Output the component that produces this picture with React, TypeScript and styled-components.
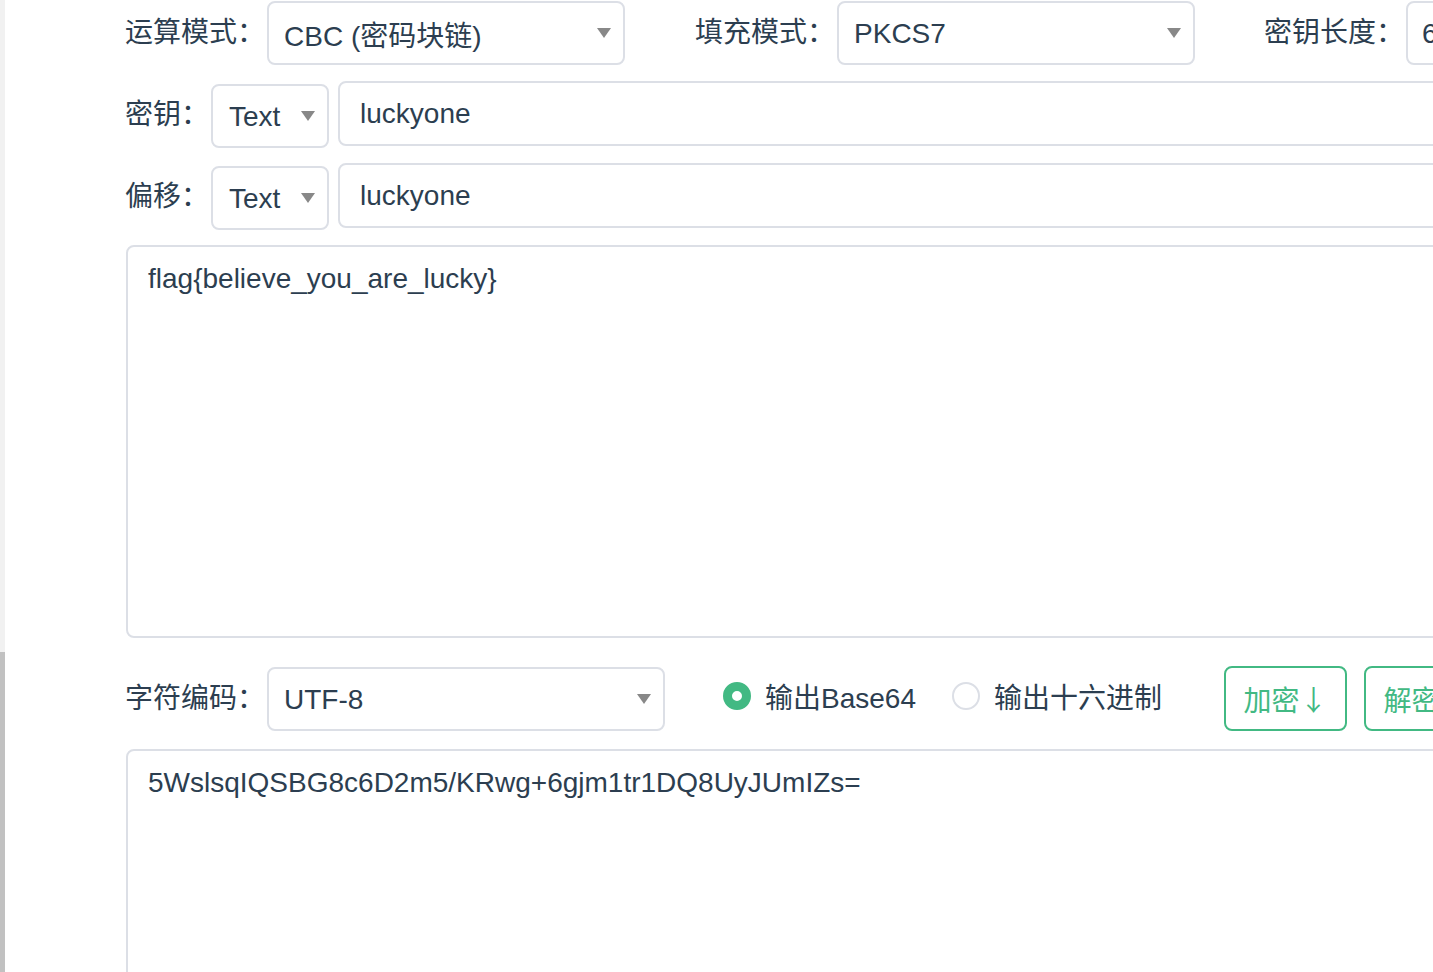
import React from 'react';
import styled, { createGlobalStyle } from 'styled-components';

const GlobalStyle = createGlobalStyle`
  *, *::before, *::after { box-sizing: border-box; }
  html, body { margin: 0; padding: 0; background: #fff; overflow: hidden; }
  body {
    font-family: "Liberation Sans", "Noto Sans CJK SC", sans-serif;
    color: #2c3e50;
  }
`;

const FONT = `"Liberation Sans", "Noto Sans CJK SC", sans-serif`;
const BORDER = '#dcdfe6';
const GREEN = '#42b983';

const Page = styled.div`
  display: flex;
  width: 1433px;
  height: 972px;
  overflow: hidden;
`;

const ScrollTrack = styled.div`
  flex: 0 0 5px;
  display: flex;
  flex-direction: column;
  background: #f1f1f1;
`;

const ScrollThumb = styled.div`
  margin-top: 652px;
  flex: 1;
  background: #c1c1c1;
`;

const Main = styled.div`
  flex: 0 0 1800px;
  padding: 1px 0 0 120px;
  display: flex;
  flex-direction: column;
`;

const Row = styled.div<{ $mt?: number; $align?: string }>`
  display: flex;
  flex-shrink: 0;
  align-items: ${(p) => p.$align ?? 'center'};
  margin-top: ${(p) => p.$mt ?? 0}px;
`;

const Field = styled.div<{ $ml?: number }>`
  display: flex;
  align-items: center;
  margin-left: ${(p) => p.$ml ?? 0}px;
  flex-shrink: 0;
`;

const Label = styled.span`
  align-self: center;
  font-size: 28px;
  line-height: 1;
  white-space: nowrap;
  margin-right: 2px;
  flex-shrink: 0;
`;

const SelectBox = styled.div<{ $w: number; $pl?: number; $mt?: number }>`
  width: ${(p) => p.$w}px;
  height: 64px;
  flex-shrink: 0;
  margin-top: ${(p) => p.$mt ?? 0}px;
  border: 2px solid ${BORDER};
  border-radius: 8px;
  background: #fff;
  display: flex;
  align-items: center;
  justify-content: space-between;
  padding: 0 12px 0 ${(p) => p.$pl ?? 15}px;
  font-size: 28px;
  white-space: nowrap;
`;

const SelectText = styled.span`
  padding-top: 2px;
`;

const Caret = () => (
  <svg width="14" height="10" viewBox="0 0 14 10">
    <path d="M0 0 L14 0 L7 10 Z" fill="#888" />
  </svg>
);

const TextInput = styled.input`
  flex: 1;
  height: 65px;
  margin-left: 9px;
  border: 2px solid ${BORDER};
  border-radius: 8px;
  padding: 0 20px;
  font-family: ${FONT};
  font-size: 28px;
  color: #2c3e50;
  background: #fff;
  outline: none;
`;

const TextArea = styled.textarea<{ $h: number; $mt: number }>`
  display: block;
  flex-shrink: 0;
  width: calc(100% - 1px);
  height: ${(p) => p.$h}px;
  margin-top: ${(p) => p.$mt}px;
  margin-left: 1px;
  border: 2px solid ${BORDER};
  border-radius: 8px;
  padding: 11px 20px;
  font-family: ${FONT};
  font-size: 28px;
  line-height: 1.5;
  color: #2c3e50;
  background: #fff;
  resize: none;
  outline: none;
`;

const RadioGroup = styled.div`
  align-self: center;
  display: flex;
  align-items: center;
  margin: 0 0 6px 58px;
  flex-shrink: 0;
`;

const RadioItem = styled.label<{ $ml?: number }>`
  display: flex;
  align-items: center;
  margin-left: ${(p) => p.$ml ?? 0}px;
  font-size: 28px;
  white-space: nowrap;
`;

const RadioDot = styled.span<{ $checked?: boolean }>`
  width: 28px;
  height: 28px;
  border-radius: 50%;
  background: #fff;
  border: ${(p) => (p.$checked ? `9px solid ${GREEN}` : `2px solid ${BORDER}`)};
  margin-right: 14px;
  flex-shrink: 0;
`;

const Button = styled.button<{ $ml?: number }>`
  height: 65px;
  width: 123px;
  flex-shrink: 0;
  margin-left: ${(p) => p.$ml ?? 0}px;
  border: 2px solid ${GREEN};
  border-radius: 8px;
  background: #fff;
  color: ${GREEN};
  font-family: ${FONT};
  font-size: 28px;
  padding: 0;
  white-space: nowrap;
  cursor: pointer;
`;

const Arrow = styled.span`
  font-family: "Noto Sans CJK SC", sans-serif;
`;

export default function App() {
  return (
    <>
      <GlobalStyle />
      <Page>
        <ScrollTrack>
          <ScrollThumb />
        </ScrollTrack>
        <Main>
          <Row>
            <Field>
              <Label>运算模式：</Label>
              <SelectBox $w={358}>
                <SelectText>CBC (密码块链)</SelectText>
                <Caret />
              </SelectBox>
            </Field>
            <Field $ml={70}>
              <Label>填充模式：</Label>
              <SelectBox $w={358}>
                <SelectText>PKCS7</SelectText>
                <Caret />
              </SelectBox>
            </Field>
            <Field $ml={69}>
              <Label>密钥长度：</Label>
              <SelectBox $w={358} $pl={14}>
                <SelectText>64</SelectText>
                <Caret />
              </SelectBox>
            </Field>
          </Row>

          <Row $mt={16} $align="flex-start">
            <Label>密钥：</Label>
            <SelectBox $w={118} $pl={16} $mt={3}>
              <SelectText>Text</SelectText>
              <Caret />
            </SelectBox>
            <TextInput readOnly value="luckyone" />
          </Row>

          <Row $mt={15} $align="flex-start">
            <Label>偏移：</Label>
            <SelectBox $w={118} $pl={16} $mt={3}>
              <SelectText>Text</SelectText>
              <Caret />
            </SelectBox>
            <TextInput readOnly value="luckyone" />
          </Row>

          <TextArea $h={393} $mt={15} readOnly value="flag{believe_you_are_lucky}" />

          <Row $mt={28} $align="flex-start">
            <Label>字符编码：</Label>
            <SelectBox $w={398} $mt={1}>
              <SelectText>UTF-8</SelectText>
              <Caret />
            </SelectBox>
            <RadioGroup>
              <RadioItem>
                <RadioDot $checked />
                输出Base64
              </RadioItem>
              <RadioItem $ml={36}>
                <RadioDot />
                输出十六进制
              </RadioItem>
            </RadioGroup>
            <Button $ml={62}>
              加密<Arrow>↓</Arrow>
            </Button>
            <Button $ml={17}>
              解密<Arrow>↑</Arrow>
            </Button>
          </Row>

          <TextArea
            $h={300}
            $mt={18}
            readOnly
            value="5WslsqIQSBG8c6D2m5/KRwg+6gjm1tr1DQ8UyJUmIZs="
          />
        </Main>
      </Page>
    </>
  );
}
